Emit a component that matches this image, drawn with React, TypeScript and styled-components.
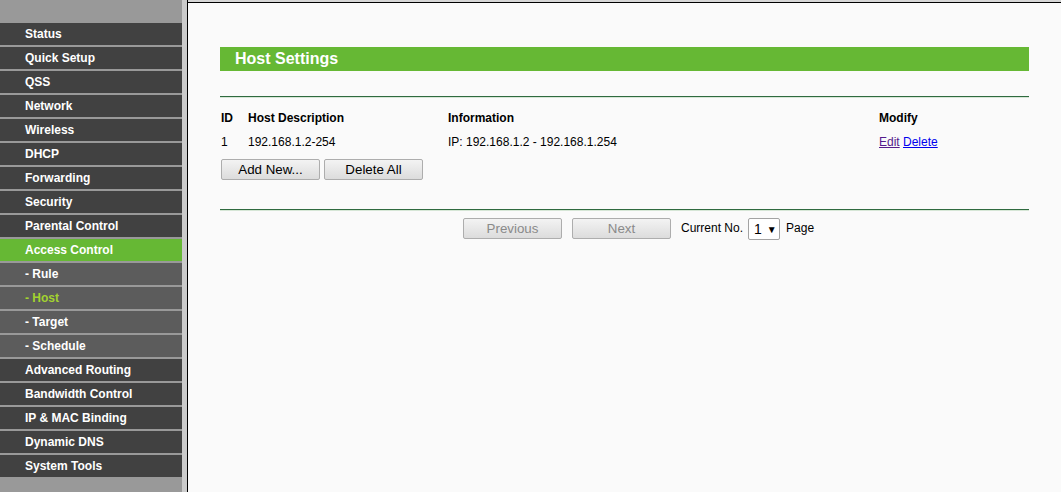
import React from 'react'
import styled, { createGlobalStyle } from 'styled-components'

const Global = createGlobalStyle`
  html, body {
    margin: 0;
    padding: 0;
    background: #fafafa;
    font-family: "Liberation Sans", Arial, sans-serif;
  }
`

const Page = styled.div`
  display: flex;
  min-height: 492px;
  width: 1061px;
  overflow: hidden;
`

const Menu = styled.aside`
  width: 182px;
  flex-shrink: 0;
  background: #999999;
  padding-top: 23px;
  display: flex;
  flex-direction: column;
  gap: 2px;
  border-right: 5px solid #cbcbcb;
`

const MenuItem = styled.div<{ $sub?: boolean; $active?: boolean; $current?: boolean }>`
  height: 22px;
  line-height: 22px;
  padding-left: 25px;
  font-size: 12px;
  font-weight: bold;
  color: ${p => (p.$current ? '#a3d32f' : '#ffffff')};
  background: ${p => (p.$active ? '#66b834' : p.$sub ? '#5c5c5c' : '#414141')};
  white-space: nowrap;
`

const Divider = styled.div`
  width: 1px;
  flex-shrink: 0;
  background: #000;
`

const Content = styled.main`
  flex: 1;
  border-top: 2px solid #d6d6d6;
  box-shadow: inset 0 1px 0 #000;
  padding: 45px 32px 0 32px;
  background: #fafafa;
`

const TitleBar = styled.h1`
  margin: 0 0 25px 0;
  height: 24px;
  line-height: 24px;
  background: #66b834;
  color: #fff;
  font-size: 16px;
  font-weight: bold;
  padding-left: 15px;
`

const Rule = styled.div`
  height: 0;
  border-top: 1px solid #2f6a3f;
  border-bottom: 1px solid #d6e6d6;
`

const Table = styled.div`
  display: grid;
  grid-template-columns: 27px 200px 431px auto;
  margin-top: 8px;
  padding-left: 1px;
  font-size: 12px;
  color: #000;
`

const Cell = styled.div<{ $head?: boolean }>`
  height: 24px;
  line-height: 24px;
  font-weight: ${p => (p.$head ? 'bold' : 'normal')};
  white-space: nowrap;
`

const Link = styled.a<{ $visited?: boolean }>`
  color: ${p => (p.$visited ? '#551a8b' : '#0000ee')};
  text-decoration: underline;
  cursor: pointer;
`

const ButtonRow = styled.div`
  display: flex;
  gap: 4px;
  padding-left: 1px;
  margin-top: 5px;
  margin-bottom: 29px;
`

const Button = styled.button<{ $off?: boolean }>`
  width: 99px;
  height: 21px;
  padding: 0;
  font-family: "Liberation Sans", Arial, sans-serif;
  font-size: 13.33px;
  color: ${p => (p.$off ? '#8a8a8a' : '#000')};
  background: linear-gradient(#f3f3f3, #dcdcdc);
  border: 1px solid #adadad;
  border-radius: 2px;
`

const Pager = styled.div`
  display: flex;
  align-items: flex-start;
  margin-top: 7px;
  padding-left: 243px;
  font-size: 12px;
`

const PagerButtons = styled.div`
  display: flex;
  gap: 10px;
  margin-right: 10px;
`

const Label = styled.span`
  line-height: 20px;
`

const Select = styled.div`
  width: 32px;
  height: 22px;
  margin: 0 6px 0 5px;
  border: 1px solid #a3a3a3;
  border-radius: 2px;
  background: #fff;
  display: flex;
  align-items: center;
  gap: 5px;
  padding-left: 5px;
  box-sizing: border-box;
  font-size: 14px;
  span {
    font-size: 10px;
  }
`

const menu = [
  'Status',
  'Quick Setup',
  'QSS',
  'Network',
  'Wireless',
  'DHCP',
  'Forwarding',
  'Security',
  'Parental Control',
]
const sub = ['- Rule', '- Host', '- Target', '- Schedule']
const menuAfter = ['Advanced Routing', 'Bandwidth Control', 'IP & MAC Binding', 'Dynamic DNS', 'System Tools']

export default function App() {
  return (
    <>
      <Global />
      <Page>
        <Menu>
          {menu.map(m => (
            <MenuItem key={m}>{m}</MenuItem>
          ))}
          <MenuItem $active>Access Control</MenuItem>
          {sub.map(s => (
            <MenuItem key={s} $sub $current={s === '- Host'}>
              {s}
            </MenuItem>
          ))}
          {menuAfter.map(m => (
            <MenuItem key={m}>{m}</MenuItem>
          ))}
        </Menu>
        <Divider />
        <Content>
          <TitleBar>Host Settings</TitleBar>
          <Rule />
          <Table>
            <Cell $head>ID</Cell>
            <Cell $head>Host Description</Cell>
            <Cell $head>Information</Cell>
            <Cell $head>Modify</Cell>
            <Cell>1</Cell>
            <Cell>192.168.1.2-254</Cell>
            <Cell>IP: 192.168.1.2 - 192.168.1.254</Cell>
            <Cell>
              <Link $visited>Edit</Link> <Link>Delete</Link>
            </Cell>
          </Table>
          <ButtonRow>
            <Button>Add New...</Button>
            <Button>Delete All</Button>
          </ButtonRow>
          <Rule />
          <Pager>
            <PagerButtons>
              <Button $off disabled>Previous</Button>
              <Button $off disabled>Next</Button>
            </PagerButtons>
            <Label>Current No.</Label>
            <Select>
              1<span>▼</span>
            </Select>
            <Label>Page</Label>
          </Pager>
        </Content>
      </Page>
    </>
  )
}
